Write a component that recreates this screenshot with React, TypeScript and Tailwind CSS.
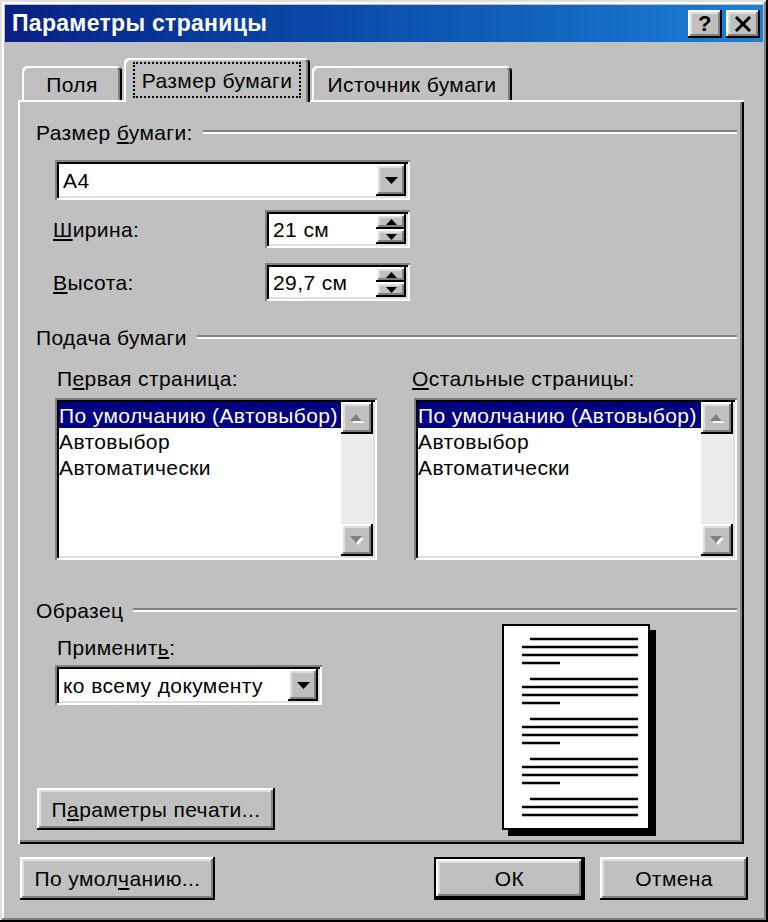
const raised =
  "bg-[#c0c0c0] shadow-[inset_-2px_-2px_0_#000,inset_2px_2px_0_#fff,inset_-4px_-4px_0_#808080,inset_4px_4px_0_#dfdfdf]";
const sunken =
  "bg-white shadow-[inset_2px_2px_0_#808080,inset_-2px_-2px_0_#fff,inset_4px_4px_0_#000,inset_-4px_-4px_0_#dfdfdf]";

function Arrow({ dir, w, h, color = "#000" }: { dir: "up" | "down"; w: number; h: number; color?: string }) {
  const pts = dir === "down" ? `0,0 ${w},0 ${w / 2},${h}` : `0,${h} ${w},${h} ${w / 2},0`;
  return (
    <svg width={w} height={h} viewBox={`0 0 ${w} ${h}`}>
      <polygon points={pts} fill={color} />
    </svg>
  );
}

function GrayArrow({ dir }: { dir: "up" | "down" }) {
  return (
    <div className="relative w-[14px] h-[8px]">
      <div className="absolute left-[2px] top-[2px]">
        <Arrow dir={dir} w={12} h={7} color="#fff" />
      </div>
      <div className="absolute left-0 top-0">
        <Arrow dir={dir} w={12} h={7} color="#808080" />
      </div>
    </div>
  );
}

function GroupHeader({ children }: { children: React.ReactNode }) {
  return (
    <div className="flex items-center h-[24px] pl-[18px] pr-[7px]">
      <span>{children}</span>
      <div className="flex-1 ml-[10px] h-[4px] border-t-2 border-t-[#808080] border-b-2 border-b-white" />
    </div>
  );
}

function Combo({ value, className }: { value: string; className: string }) {
  return (
    <div className={`${sunken} ${className} flex p-[4px]`}>
      <div className="flex-1 flex items-center pl-[4px] whitespace-nowrap overflow-hidden">{value}</div>
      <div className={`${raised} w-[30px] flex items-center justify-center`}>
        <Arrow dir="down" w={13} h={7} />
      </div>
    </div>
  );
}

function Spin({ value }: { value: string }) {
  return (
    <div className={`${sunken} w-[145px] h-[38px] flex p-[4px]`}>
      <div className="flex-1 flex items-center pl-[4px]">{value}</div>
      <div className="w-[30px] flex flex-col">
        <div className={`${raised} flex-1 flex items-center justify-center`}>
          <Arrow dir="up" w={11} h={6} />
        </div>
        <div className={`${raised} flex-1 flex items-center justify-center`}>
          <Arrow dir="down" w={11} h={6} />
        </div>
      </div>
    </div>
  );
}

function ListBox({ className }: { className: string }) {
  return (
    <div className={`${sunken} ${className} h-[162px] flex p-[4px]`}>
      <div className="flex-1 flex flex-col overflow-hidden">
        <div className="h-[26px] bg-[#000080] text-white flex items-center whitespace-nowrap overflow-hidden">
          По умолчанию (Автовыбор)
        </div>
        <div className="h-[26px] flex items-center">Автовыбор</div>
        <div className="h-[26px] flex items-center">Автоматически</div>
      </div>
      <div className="w-[32px] flex flex-col bg-[#ececec]">
        <div className={`${raised} h-[32px] flex items-center justify-center`}>
          <GrayArrow dir="up" />
        </div>
        <div className="flex-1" />
        <div className={`${raised} h-[32px] flex items-center justify-center`}>
          <GrayArrow dir="down" />
        </div>
      </div>
    </div>
  );
}

function Preview() {
  const groups = [0, 1, 2, 3, 4];
  return (
    <div className="relative w-[148px] h-[206px] mt-[2px]">
      <div className="absolute left-[6px] top-[6px] w-[148px] h-[206px] bg-black" />
      <div className="absolute inset-0 bg-white border-2 border-black">
        <svg width="144" height="202" viewBox="0 0 144 202" className="block">
          {groups.map((g) => {
            const y = 13 + g * 40;
            return (
              <g key={g} stroke="#000" strokeWidth="2.5">
                <line x1="26" y1={y} x2="134" y2={y} />
                <line x1="18" y1={y + 8} x2="134" y2={y + 8} />
                <line x1="18" y1={y + 16} x2="134" y2={y + 16} />
                {g < 4 && <line x1="18" y1={y + 24} x2="56" y2={y + 24} />}
              </g>
            );
          })}
        </svg>
      </div>
    </div>
  );
}

export default function App() {
  return (
    <div className="w-[768px] h-[922px] bg-[#c0c0c0] p-[5px] flex flex-col font-['Liberation_Sans',Arial,sans-serif] text-[21px] tracking-[0.4px] text-black leading-none shadow-[inset_-2px_-2px_0_#000,inset_2px_2px_0_#dfdfdf,inset_-4px_-4px_0_#808080,inset_4px_4px_0_#fff]">
      {/* title bar */}
      <div className="h-[37px] bg-gradient-to-r from-[#0a1f86] to-[#1d7fd6] flex items-center pl-[7px] pr-[3px]">
        <span className="text-white font-bold text-[23px] tracking-[0.3px] flex-1">Параметры страницы</span>
        <div className="flex gap-[4px]">
          <div className={`${raised} w-[34px] h-[28px] flex items-center justify-center font-bold text-[22px]`}>?</div>
          <div className={`${raised} w-[34px] h-[28px] flex items-center justify-center`}>
            <svg width="18" height="16" viewBox="0 0 18 16">
              <path d="M2 1 L16 15 M16 1 L2 15" stroke="#000" strokeWidth="3" />
            </svg>
          </div>
        </div>
      </div>

      {/* tabs */}
      <div className="pl-[13px] pr-[19px] mt-[16px]">
        <div className="flex items-end h-[44px] relative z-10 -mb-[2px]">
          <div className="ml-[4px] w-[100px] h-[34px] mb-[2px] rounded-t-[5px] shadow-[inset_2px_2px_0_#fff,inset_-2px_0_0_#000,inset_-4px_0_0_#808080] flex items-center justify-center pt-[2px]">
            Поля
          </div>
          <div className="ml-[2px] w-[186px] h-[44px] bg-[#c0c0c0] rounded-t-[5px] shadow-[inset_2px_2px_0_#fff,inset_-2px_0_0_#000,inset_-4px_0_0_#808080] flex items-start justify-center pt-[4px]">
            <div className="w-[168px] h-[36px] border-2 border-dotted border-black flex items-center justify-center">
              Размер бумаги
            </div>
          </div>
          <div className="ml-[2px] w-[200px] h-[34px] mb-[2px] rounded-t-[5px] shadow-[inset_2px_2px_0_#fff,inset_-2px_0_0_#000,inset_-4px_0_0_#808080] flex items-center justify-center pt-[2px]">
            Источник бумаги
          </div>
        </div>

        {/* panel */}
        <div className="h-[744px] pt-[20px] shadow-[inset_2px_2px_0_#fff,inset_-2px_-2px_0_#000,inset_-4px_-4px_0_#808080]">
          <GroupHeader>
            Размер <u className="decoration-2 underline-offset-2">б</u>умаги:
          </GroupHeader>
          <Combo value="А4" className="ml-[37px] mt-[16px] w-[355px] h-[40px]" />
          <div className="flex items-center ml-[35px] mt-[10px] h-[38px]">
            <span className="w-[212px]">
              <u className="decoration-2 underline-offset-2">Ш</u>ирина:
            </span>
            <Spin value="21 см" />
          </div>
          <div className="flex items-center ml-[35px] mt-[15px] h-[38px]">
            <span className="w-[212px]">
              <u className="decoration-2 underline-offset-2">В</u>ысота:
            </span>
            <Spin value="29,7 см" />
          </div>

          <div className="mt-[24px]">
            <GroupHeader>Подача бумаги</GroupHeader>
          </div>
          <div className="flex mt-[18px]">
            <div className="ml-[37px] w-[322px] flex flex-col">
              <div className="h-[22px] flex items-center pl-[2px]">
                П<u className="decoration-2 underline-offset-2">е</u>рвая страница:
              </div>
              <ListBox className="mt-[9px] w-[322px]" />
            </div>
            <div className="ml-[37px] w-[323px] flex flex-col">
              <div className="h-[22px] flex items-center -ml-[2px]">
                <u className="decoration-2 underline-offset-2">О</u>стальные страницы:
              </div>
              <ListBox className="mt-[9px] w-[323px]" />
            </div>
          </div>

          <div className="mt-[38px]">
            <GroupHeader>Образец</GroupHeader>
          </div>
          <div className="flex">
            <div className="ml-[19px] w-[465px] flex flex-col items-start">
              <div className="h-[22px] mt-[14px] ml-[20px] flex items-center">
                Применит<u className="decoration-2 underline-offset-2">ь</u>:
              </div>
              <Combo value="ко всему документу" className="ml-[18px] mt-[7px] w-[267px] h-[40px]" />
              <div className={`${raised} mt-[83px] w-[238px] h-[42px] flex items-center justify-center`}>
                П<u className="decoration-2 underline-offset-2">а</u>раметры печати...
              </div>
            </div>
            <Preview />
          </div>
        </div>
      </div>

      {/* bottom buttons */}
      <div className="flex mt-[13px] h-[43px] pl-[15px] pr-[15px]">
        <div className={`${raised} w-[195px] flex items-center justify-center`}>
          По умол<u className="decoration-2 underline-offset-2">ч</u>анию...
        </div>
        <div className="ml-auto w-[151px] border-2 border-black">
          <div className={`${raised} h-full flex items-center justify-center`}>ОК</div>
        </div>
        <div className={`${raised} ml-[15px] w-[148px] flex items-center justify-center`}>Отмена</div>
      </div>
    </div>
  );
}
